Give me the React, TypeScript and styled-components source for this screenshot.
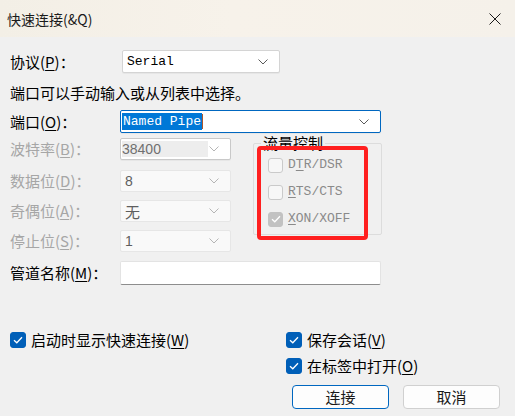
import React from "react";
import styled, { createGlobalStyle } from "styled-components";

const GlobalStyle = createGlobalStyle`
  html, body {
    margin: 0;
    padding: 0;
    background: #f0f0f0;
  }
  body {
    font-family: "Noto Sans CJK SC", "Noto Sans", sans-serif;
  }
`;

const Window = styled.div`
  width: 515px;
  height: 416px;
  background: #f0f0f0;
  display: flex;
  flex-direction: column;
  overflow: hidden;
`;

const TitleBar = styled.div`
  height: 37px;
  flex: none;
  display: flex;
  align-items: center;
  justify-content: space-between;
  padding: 0 14px 0 7px;
  background: linear-gradient(90deg, #f3efe6 0%, #f7f2ea 45%, #f5f1ea 100%);
  font-size: 14px;
  color: #1b1b1b;
`;

const Body = styled.div`
  padding: 13px 0 0 10px;
  display: flex;
  flex-direction: column;
`;

const Row = styled.div<{ $top?: number }>`
  display: flex;
  align-items: center;
  margin-top: ${(p) => p.$top ?? 0}px;
`;

const Label = styled.div<{ $disabled?: boolean }>`
  width: 110px;
  flex: none;
  font-size: 15px;
  line-height: 20px;
  white-space: nowrap;
  color: ${(p) => (p.$disabled ? "#a6a6a6" : "#000")};
  u {
    text-decoration-thickness: 1px;
    text-underline-offset: 2px;
  }
`;

const Hint = styled.div`
  margin-top: 10px;
  font-size: 15px;
  line-height: 20px;
  color: #000;
`;

type ComboKind = "normal" | "focus" | "locked" | "faint";

const comboBorder: Record<ComboKind, string> = {
  normal: "#d4d4d4",
  focus: "#0067c0",
  locked: "#c9c9c9",
  faint: "#e6e6e6",
};

const Combo = styled.div<{ $width: number; $kind: ComboKind; $shift?: number }>`
  width: ${(p) => p.$width}px;
  height: ${(p) => (p.$kind === "normal" || p.$kind === "focus" ? 23 : 22)}px;
  box-sizing: border-box;
  margin-left: ${(p) => p.$shift ?? 0}px;
  display: flex;
  align-items: center;
  padding: 0 11px 0 ${(p) => (p.$kind === "normal" ? 4 : 1)}px;
  border: 1px solid ${(p) => comboBorder[p.$kind]};
  border-radius: 2px;
  background: ${(p) => (p.$kind === "faint" ? "#f9f9f9" : "#fff")};
  box-shadow: ${(p) => (p.$kind === "faint" ? "none" : "0 1px 0 rgba(0,0,0,0.04)")};
`;

const MonoText = styled.span`
  font-family: "Liberation Mono", "Noto Sans CJK SC", monospace;
  font-size: 13px;
  color: #000;
  white-space: pre;
`;

const Selected = styled(MonoText)`
  background: #0078d7;
  color: #fff;
  padding: 1px 1px;
`;

const Caret = styled.span`
  width: 1px;
  height: 15px;
  background: #b0562a;
`;

const LockedField = styled.div`
  width: 86px;
  height: 16px;
  display: flex;
  align-items: center;
  background: #ededed;
  font-family: "Liberation Sans", sans-serif;
  font-size: 14px;
  color: #707070;
`;

const FaintText = styled.span<{ $cjk?: boolean }>`
  padding-left: 3px;
  font-family: ${(p) =>
    p.$cjk ? '"Noto Sans CJK SC", sans-serif' : '"Liberation Sans", sans-serif'};
  font-size: ${(p) => (p.$cjk ? 15 : 14)}px;
  color: #5e5e5e;
`;

const Chevron = styled.svg<{ $dim?: boolean }>`
  margin-left: auto;
  flex: none;
  stroke: ${(p) => (p.$dim ? "#b5b5b5" : "#5a5a5a")};
`;

const Arrow = ({ dim }: { dim?: boolean }) => (
  <Chevron $dim={dim} width="10" height="6" viewBox="0 0 10 6" fill="none" strokeWidth="1">
    <polyline points="0.5,0.5 5,5 9.5,0.5" />
  </Chevron>
);

const Middle = styled.div`
  display: flex;
  margin-top: 5px;
`;

const LeftColumn = styled.div`
  display: flex;
  flex-direction: column;
`;

const Group = styled.fieldset`
  position: relative;
  width: 129px;
  height: 102px;
  box-sizing: border-box;
  margin: -5px 0 0 22px;
  padding: 4px 0 0 14px;
  border: 1px solid #dcdcdc;
  border-radius: 2px;
  display: flex;
  flex-direction: column;
  gap: 11px;
`;

const Legend = styled.legend`
  padding: 0 2px;
  margin-left: -7px;
  font-size: 15px;
  line-height: 20px;
  color: #000;
`;

const Highlight = styled.div`
  position: absolute;
  left: 3px;
  top: -7px;
  width: 111px;
  height: 94px;
  box-sizing: border-box;
  border: 4px solid #ff1f1f;
  border-radius: 4px;
  pointer-events: none;
`;

const CheckRow = styled.div<{ $top?: number }>`
  display: flex;
  align-items: center;
  gap: 5px;
  margin-top: ${(p) => p.$top ?? 0}px;
  font-size: 15px;
  line-height: 16px;
  color: #000;
  u {
    text-decoration-thickness: 1px;
    text-underline-offset: 2px;
  }
`;

type BoxKind = "on" | "off-disabled" | "on-disabled";

const Box = styled.span<{ $kind: BoxKind; $size: number }>`
  width: ${(p) => p.$size}px;
  height: ${(p) => p.$size}px;
  box-sizing: border-box;
  flex: none;
  display: flex;
  align-items: center;
  justify-content: center;
  border-radius: 3px;
  border: 1px solid
    ${(p) => (p.$kind === "on" ? "#005fb8" : p.$kind === "on-disabled" ? "#c2c2c2" : "#cacaca")};
  background: ${(p) =>
    p.$kind === "on" ? "#005fb8" : p.$kind === "on-disabled" ? "#c2c2c2" : "#f7f7f7"};
`;

const DisabledText = styled(MonoText)`
  color: #8a8a8a;
  u {
    text-decoration-thickness: 1px;
    text-underline-offset: 2px;
  }
`;

const Tick = () => (
  <svg width="10" height="8" viewBox="0 0 10 8" fill="none" stroke="#fff" strokeWidth="1.3">
    <polyline points="1,4.2 3.8,6.8 9,1.2" />
  </svg>
);

const Check = ({ kind, size, children, top }: { kind: BoxKind; size: number; children: React.ReactNode; top?: number }) => (
  <CheckRow $top={top}>
    <Box $kind={kind} $size={size}>{kind !== "off-disabled" && <Tick />}</Box>
    {children}
  </CheckRow>
);

const TextInput = styled.div`
  width: 261px;
  height: 24px;
  box-sizing: border-box;
  background: #fff;
  border: 1px solid #e3e3e3;
  border-bottom: 1px solid #8d8d8d;
  border-radius: 2px;
`;

const Options = styled.div`
  display: flex;
  margin-top: 47px;
`;

const OptionColumn = styled.div<{ $width?: number }>`
  width: ${(p) => (p.$width ? `${p.$width}px` : "auto")};
  display: flex;
  flex-direction: column;
`;

const Buttons = styled.div`
  display: flex;
  justify-content: flex-end;
  gap: 14px;
  padding-right: 15px;
  margin-top: 11px;
`;

const Button = styled.button<{ $primary?: boolean }>`
  width: 97px;
  height: 24px;
  box-sizing: border-box;
  padding: 0;
  border: 1px solid ${(p) => (p.$primary ? "#0067c0" : "#d0d0d0")};
  border-radius: 4px;
  background: #fdfdfd;
  font-family: "Noto Sans CJK SC", sans-serif;
  font-size: 15px;
  line-height: 20px;
  color: #1a1a1a;
`;

export default function App() {
  return (
    <Window>
      <GlobalStyle />
      <TitleBar>
        <span>快速连接(&amp;Q)</span>
        <svg width="12" height="12" viewBox="0 0 12 12" stroke="#1b1b1b" strokeWidth="1">
          <line x1="0.5" y1="0.5" x2="11.5" y2="11.5" />
          <line x1="11.5" y1="0.5" x2="0.5" y2="11.5" />
        </svg>
      </TitleBar>

      <Body>
        <Row>
          <Label>
            协议(<u>P</u>)：
          </Label>
          <Combo $width={158} $kind="normal" $shift={2}>
            <MonoText>Serial</MonoText>
            <Arrow />
          </Combo>
        </Row>

        <Hint>端口可以手动输入或从列表中选择。</Hint>

        <Row $top={7}>
          <Label>
            端口(<u>O</u>)：
          </Label>
          <Combo $width={261} $kind="focus">
            <Selected>Named Pipe</Selected>
            <Caret />
            <Arrow />
          </Combo>
        </Row>

        <Middle>
          <LeftColumn>
            <Row>
              <Label $disabled>
                波特率(<u>B</u>)：
              </Label>
              <Combo $width={111} $kind="locked">
                <LockedField>38400</LockedField>
                <Arrow dim />
              </Combo>
            </Row>
            <Row $top={10}>
              <Label $disabled>
                数据位(<u>D</u>)：
              </Label>
              <Combo $width={111} $kind="faint">
                <FaintText>8</FaintText>
                <Arrow dim />
              </Combo>
            </Row>
            <Row $top={8}>
              <Label $disabled>
                奇偶位(<u>A</u>)：
              </Label>
              <Combo $width={111} $kind="faint">
                <FaintText $cjk>无</FaintText>
                <Arrow dim />
              </Combo>
            </Row>
            <Row $top={8}>
              <Label $disabled>
                停止位(<u>S</u>)：
              </Label>
              <Combo $width={111} $kind="faint">
                <FaintText>1</FaintText>
                <Arrow dim />
              </Combo>
            </Row>
          </LeftColumn>

          <Group>
            <Legend>流量控制</Legend>
            <Check kind="off-disabled" size={15}>
              <DisabledText>
                D<u>T</u>R/DSR
              </DisabledText>
            </Check>
            <Check kind="off-disabled" size={15}>
              <DisabledText>
                <u>R</u>TS/CTS
              </DisabledText>
            </Check>
            <Check kind="on-disabled" size={15}>
              <DisabledText>
                <u>X</u>ON/XOFF
              </DisabledText>
            </Check>
            <Highlight />
          </Group>
        </Middle>

        <Row $top={9}>
          <Label>
            管道名称(<u>M</u>)：
          </Label>
          <TextInput />
        </Row>

        <Options>
          <OptionColumn $width={276}>
            <Check kind="on" size={16}>
              <span>
                启动时显示快速连接(<u>W</u>)
              </span>
            </Check>
          </OptionColumn>
          <OptionColumn>
            <Check kind="on" size={16}>
              <span>
                保存会话(<u>V</u>)
              </span>
            </Check>
            <Check kind="on" size={16} top={10}>
              <span>
                在标签中打开(<u>O</u>)
              </span>
            </Check>
          </OptionColumn>
        </Options>
      </Body>

      <Buttons>
        <Button $primary>连接</Button>
        <Button>取消</Button>
      </Buttons>
    </Window>
  );
}
